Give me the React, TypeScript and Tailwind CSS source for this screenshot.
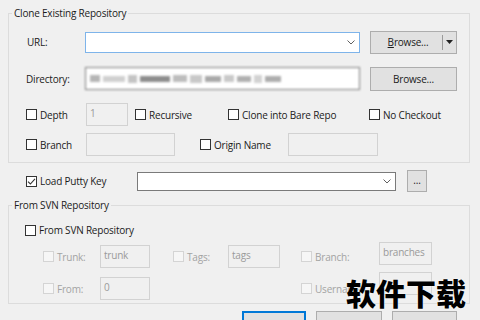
import React from "react";

const Check = ({ checked = false, disabled = false }: { checked?: boolean; disabled?: boolean }) => (
  <span
    className={
      "flex h-[11px] w-[11px] shrink-0 items-center justify-center border " +
      (disabled ? "border-[#d4d4d4] bg-[#f6f6f6]" : "border-[#333333] bg-white")
    }
  >
    {checked && (
      <svg width="9" height="9" viewBox="0 0 9 9">
        <path d="M1 4.6 L3.4 7 L8 1.8" fill="none" stroke="#333" strokeWidth="1.1" />
      </svg>
    )}
  </span>
);

const CheckLabel = ({
  label,
  w,
  checked,
  disabled,
}: {
  label: string;
  w: string;
  checked?: boolean;
  disabled?: boolean;
}) => (
  <div className={"flex shrink-0 items-center gap-[3px] " + w}>
    <Check checked={checked} disabled={disabled} />
    <span className={disabled ? "text-[#a3a3a3]" : "text-[#1b1b1b]"}>{label}</span>
  </div>
);

const Field = ({ w, h = "h-[23px]", text, extra = "" }: { w: string; h?: string; text?: string; extra?: string }) => (
  <div className={"shrink-0 border border-[#d2d2d2] bg-[#f0f0f0] px-[3px] pt-[2px] text-[#9a9a9a] " + w + " " + h + " " + extra}>
    {text}
  </div>
);

const Chevron = () => (
  <svg width="8" height="5" viewBox="0 0 8 5" className="mr-[4px]">
    <path d="M0.5 0.5 L4 4 L7.5 0.5" fill="none" stroke="#606060" strokeWidth="1" />
  </svg>
);

export default function App() {
  return (
    <div className="relative h-[320px] w-[480px] overflow-hidden bg-[#f0f0f0] font-['Open_Sans','Noto_Sans',sans-serif] text-[10px] leading-[14px] tracking-[-0.2px] text-[#1b1b1b]">
      {/* Clone Existing Repository */}
      <fieldset className="ml-[8px] mr-[10px] mt-[6px] border border-[#dcdcdc] pb-[6px]">
        <legend className="ml-[3px] px-[2px] leading-[14px]">Clone Existing Repository</legend>

        <div className="mt-[10px] flex h-[24px] items-center">
          <span className="ml-[18px] w-[58px] shrink-0">URL:</span>
          <div className="flex h-[21px] w-[275px] shrink-0 items-center justify-end border border-[#7eb4ea] bg-white">
            <Chevron />
          </div>
          <div className="ml-[10px] flex h-[23px] w-[87px] shrink-0 items-center border border-[#adadad] bg-[#e1e1e1]">
            <span className="flex-1 pl-[3px] text-center">
              <span className="underline decoration-[0.5px] underline-offset-[1px]">B</span>rowse...
            </span>
            <span className="h-[15px] w-px bg-[#9a9a9a]" />
            <span className="flex w-[13px] justify-center">
              <svg width="7" height="4" viewBox="0 0 7 4">
                <path d="M0 0 H7 L3.5 4 Z" fill="#222" />
              </svg>
            </span>
          </div>
        </div>

        <div className="mt-[12px] flex h-[25px] items-center">
          <span className="ml-[17px] w-[59px] shrink-0">Directory:</span>
          <div className="flex h-[23px] w-[275px] shrink-0 items-center gap-[3px] overflow-hidden border border-[#7a7a7a] bg-white pl-[4px] blur-[1.2px]">
            <span className="h-[7px] w-[10px] bg-[#b5b5b5]" />
            <span className="h-[6px] w-[22px] bg-[#d0d0d0]" />
            <span className="h-[8px] w-[9px] bg-[#c4c4c4]" />
            <span className="h-[6px] w-[30px] bg-[#8d8d8d]" />
            <span className="h-[7px] w-[14px] bg-[#bdbdbd]" />
            <span className="h-[8px] w-[12px] bg-[#c8c8c8]" />
            <span className="h-[6px] w-[16px] bg-[#a9a9a9]" />
            <span className="h-[7px] w-[10px] bg-[#c9c9c9]" />
            <span className="h-[6px] w-[14px] bg-[#b0b0b0]" />
            <span className="h-[8px] w-[8px] bg-[#d2d2d2]" />
            <span className="h-[6px] w-[16px] bg-[#adadad]" />
          </div>
          <div className="ml-[10px] flex h-[24px] w-[87px] shrink-0 items-center justify-center border border-[#adadad] bg-[#e1e1e1]">
            Browse...
          </div>
        </div>

        <div className="mt-[12px] flex h-[23px] items-center">
          <div className="ml-[17px]" />
          <CheckLabel label="Depth" w="w-[60px]" />
          <Field w="w-[42px]" text="1" />
          <div className="ml-[7px]" />
          <CheckLabel label="Recursive" w="w-[93px]" />
          <CheckLabel label="Clone into Bare Repo" w="w-[141px]" />
          <CheckLabel label="No Checkout" w="w-[80px]" />
        </div>

        <div className="mt-[7px] flex h-[23px] items-center">
          <div className="ml-[17px]" />
          <CheckLabel label="Branch" w="w-[60px]" />
          <Field w="w-[89px]" />
          <div className="ml-[25px]" />
          <CheckLabel label="Origin Name" w="w-[88px]" />
          <Field w="w-[90px]" />
        </div>
      </fieldset>

      {/* Load Putty Key */}
      <div className="mt-[7px] flex h-[22px] items-center">
        <div className="ml-[26px]" />
        <CheckLabel label="Load Putty Key" w="w-[111px]" checked />
        <div className="flex h-[19px] w-[259px] shrink-0 items-center justify-end border border-[#7a7a7a] bg-white">
          <Chevron />
        </div>
        <div className="ml-[11px] flex h-[22px] w-[20px] shrink-0 items-center justify-center border border-[#adadad] bg-[#e1e1e1] pb-[3px]">
          ...
        </div>
      </div>

      {/* From SVN Repository */}
      <fieldset className="ml-[8px] mr-[10px] mt-[6px] border border-[#dcdcdc] pb-[3px]">
        <legend className="ml-[3px] px-[2px] leading-[14px]">From SVN Repository</legend>

        <div className="mt-[10px] flex h-[16px] items-center">
          <div className="ml-[16px]" />
          <CheckLabel label="From SVN Repository" w="w-[140px]" />
        </div>

        <div className="mt-[7px] flex h-[23px] items-center">
          <div className="ml-[34px]" />
          <CheckLabel label="Trunk:" w="w-[57px]" disabled />
          <Field w="w-[50px]" text="trunk" />
          <div className="ml-[23px]" />
          <CheckLabel label="Tags:" w="w-[55px]" disabled />
          <Field w="w-[52px]" text="tags" />
          <div className="ml-[21px]" />
          <CheckLabel label="Branch:" w="w-[78px]" disabled />
          <Field w="w-[53px]" text="branches" extra="mb-[6px]" />
        </div>

        <div className="mt-[9px] flex h-[23px] items-center">
          <div className="ml-[34px]" />
          <CheckLabel label="From:" w="w-[57px]" disabled />
          <Field w="w-[50px]" text="0" />
          <div className="ml-[151px]" />
          <CheckLabel label="Username:" w="w-[78px]" disabled />
          <Field w="w-[53px]" extra="mb-[10px]" />
        </div>
      </fieldset>

      {/* dialog buttons */}
      <div className="mt-[7px] flex gap-[10px] pl-[242px]">
        <div className="h-[23px] w-[64px] shrink-0 border-2 border-[#0078d7] bg-[#e1e1e1]" />
        <div className="h-[23px] w-[66px] shrink-0 border border-[#adadad] bg-[#e1e1e1]" />
        <div className="h-[23px] w-[65px] shrink-0 border border-[#adadad] bg-[#e1e1e1]" />
      </div>

      {/* watermark */}
      <div className="absolute left-[346px] top-[274px] font-['Noto_Sans_CJK_SC',sans-serif] text-[30px] font-black leading-[36px] tracking-normal text-black [text-shadow:0_0_2px_#fff]">
        软件下载
      </div>
    </div>
  );
}
